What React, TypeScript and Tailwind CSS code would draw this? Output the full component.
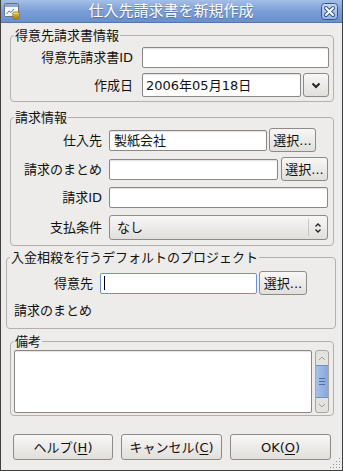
import React from 'react';

const FONT = { fontFamily: '"DejaVu Sans", "Noto Sans CJK JP", sans-serif' };

const inputCls = 'bg-white border border-[#8a8784] rounded-[2px] shadow-[inset_0_1px_1px_rgba(0,0,0,0.12)]';
const btnCls =
  'flex items-center justify-center border border-[#8e8a85] rounded-[3px] bg-gradient-to-b from-[#f8f7f6] to-[#e1dfdc] text-[13px] text-[#111]';

const Frame: React.FC<{ title: string; className: string; children: React.ReactNode }> = ({ title, className, children }) => (
  <fieldset className={`border border-[#b4b0ab] rounded-[4px] ${className}`}>
    <legend className="ml-[3px] px-[1px] text-[13px] leading-[17px] text-[#111]">{title}</legend>
    {children}
  </fieldset>
);

const SelectButton: React.FC<{ className?: string }> = ({ className = '' }) => (
  <button className={`${btnCls} h-[24px] w-[47px] ${className}`}>選択...</button>
);

const TitleIcon = () => (
  <svg width="18" height="18" viewBox="0 0 18 18">
    <rect x="1.5" y="1.5" width="14" height="13" rx="1" fill="#f4f6f8" stroke="#6b7280" />
    <rect x="2" y="2" width="13" height="3" fill="#8aa9d6" />
    <polyline points="3.5,12 6,9 8,10.5 11,7" fill="none" stroke="#4f7bc0" strokeWidth="1" />
    <ellipse cx="13" cy="15.5" rx="3.6" ry="1.6" fill="#c9a21b" stroke="#7a5d07" strokeWidth="0.7" />
    <ellipse cx="13" cy="13.5" rx="3.6" ry="1.6" fill="#e6c43a" stroke="#7a5d07" strokeWidth="0.7" />
    <ellipse cx="13" cy="11.5" rx="3.6" ry="1.6" fill="#f5da5c" stroke="#7a5d07" strokeWidth="0.7" />
  </svg>
);

const CloseIcon = () => (
  <svg width="17" height="17" viewBox="0 0 17 17">
    <defs>
      <linearGradient id="cl" x1="0" y1="0" x2="0" y2="1">
        <stop offset="0" stopColor="#c7d8f1" />
        <stop offset="1" stopColor="#93b2df" />
      </linearGradient>
    </defs>
    <rect x="0.5" y="0.5" width="16" height="16" rx="3" fill="url(#cl)" stroke="#34558a" />
    <path d="M5 5 L12 12 M12 5 L5 12" stroke="#34558a" strokeWidth="4" strokeLinecap="round" />
    <path d="M5 5 L12 12 M12 5 L5 12" stroke="#ffffff" strokeWidth="2" strokeLinecap="round" />
  </svg>
);

const Mn: React.FC<{ c: string }> = ({ c }) => <span className="underline underline-offset-2">{c}</span>;

export default function App() {
  return (
    <div
      className="relative w-[343px] h-[471px] flex flex-col bg-[#edecea] border-x border-b border-[#3f3f3f] text-[13px] leading-[17px] text-[#111] overflow-hidden"
      style={FONT}
    >
      {/* Title bar */}
      <div className="h-[23px] shrink-0 flex items-center px-[2px] bg-gradient-to-b from-[#a3bfe7] via-[#7c9fd6] to-[#6890cd] border-b border-[#5577b0]">
        <TitleIcon />
        <div className="flex-1 text-center text-white text-[15px] leading-[20px] [text-shadow:0_1px_1px_rgba(40,60,100,0.5)]">
          仕入先請求書を新規作成
        </div>
        <div className="mr-[2px]">
          <CloseIcon />
        </div>
      </div>

      {/* 得意先請求書情報 */}
      <Frame title="得意先請求書情報" className="mt-[4px] ml-[9px] mr-[8px] h-[75px]">
        <div className="mt-[3px] pr-[4px] flex items-center">
          <span className="w-[122px] text-right">得意先請求書ID</span>
          <div className={`${inputCls} ml-[9px] flex-1 h-[21px]`} />
        </div>
        <div className="mt-[5px] pr-[4px] flex items-center">
          <span className="w-[122px] text-right">作成日</span>
          <div className={`${inputCls} ml-[9px] flex-1 h-[24px] flex items-center pl-[3px]`}>2006年05月18日</div>
          <button className={`${btnCls} ml-[2px] w-[26px] h-[24px]`}>
            <svg width="10" height="7" viewBox="0 0 10 7">
              <path d="M1.5 1.5 L5 5 L8.5 1.5" fill="none" stroke="#222" strokeWidth="2" />
            </svg>
          </button>
        </div>
      </Frame>

      {/* 請求情報 */}
      <Frame title="請求情報" className="mt-[7px] ml-[9px] mr-[8px] h-[137px]">
        <div className="mt-[2px] h-[24px] flex items-center">
          <span className="w-[91px] text-right">仕入先</span>
          <div className={`${inputCls} ml-[7px] w-[158px] h-[21px] flex items-center pl-[4px]`}>製紙会社</div>
          <SelectButton className="ml-[2px]" />
        </div>
        <div className="mt-[5px] h-[24px] flex items-center">
          <span className="w-[91px] text-right">請求のまとめ</span>
          <div className={`${inputCls} ml-[7px] w-[169px] h-[21px]`} />
          <SelectButton className="ml-[3px]" />
        </div>
        <div className="mt-[6px] pr-[5px] flex items-center">
          <span className="w-[91px] text-right">請求ID</span>
          <div className={`${inputCls} ml-[7px] flex-1 h-[21px]`} />
        </div>
        <div className="mt-[7px] pr-[5px] flex items-center">
          <span className="w-[91px] text-right">支払条件</span>
          <button className={`${btnCls} ml-[7px] flex-1 h-[25px] justify-start`}>
            <span className="flex-1 text-left pl-[7px]">なし</span>
            <span className="w-[1px] h-[17px] bg-[#c9c6c2]" />
            <svg className="mx-[5px]" width="8" height="12" viewBox="0 0 8 12">
              <path d="M1.5 4.5 L4 2 L6.5 4.5 M1.5 7.5 L4 10 L6.5 7.5" fill="none" stroke="#222" strokeWidth="1.3" />
            </svg>
          </button>
        </div>
      </Frame>

      {/* 入金相殺を行うデフォルトのプロジェクト */}
      <fieldset className="mt-[3px] ml-[5px] mr-[6px] h-[80px] border border-[#b4b0ab] rounded-[4px]">
        <legend className="ml-[3px] px-[1px] text-[13px] leading-[17px]">入金相殺を行うデフォルトのプロジェクト</legend>
        <div className="mt-[5px] h-[24px] flex items-center">
          <span className="w-[86px] text-right">得意先</span>
          <div className="ml-[7px] w-[157px] h-[21px] bg-white border border-[#6e93c6] rounded-[2px] flex items-center pl-[3px]">
            <span className="w-[1px] h-[14px] bg-black" />
          </div>
          <button className={`${btnCls} ml-[2px] w-[48px] h-[24px]`}>選択...</button>
        </div>
        <div className="mt-[7px] pl-[7px]">請求のまとめ</div>
      </fieldset>

      {/* 備考 */}
      <Frame title="備考" className="mt-[4px] ml-[9px] mr-[8px] h-[83px]">
        <div className="pl-[3px] pr-[4px] flex">
          <div className={`${inputCls} w-[298px] h-[63px]`} />
          <div className="ml-[3px] w-[14px] h-[63px] flex flex-col border border-[#a9a6a2] rounded-[3px] bg-[#e4e2df] overflow-hidden">
            <div className="h-[14px] flex items-center justify-center">
              <svg width="8" height="5" viewBox="0 0 8 5">
                <path d="M1 4 L4 1 L7 4" fill="none" stroke="#a3a09c" strokeWidth="1" />
              </svg>
            </div>
            <div className="flex-1 flex flex-col items-center justify-center gap-[2px] bg-gradient-to-r from-[#a7c1e8] to-[#86a8dc] border-y border-[#6e8fc4]">
              <span className="w-[6px] h-[1px] bg-[#4e6ea3]" />
              <span className="w-[6px] h-[1px] bg-[#4e6ea3]" />
              <span className="w-[6px] h-[1px] bg-[#4e6ea3]" />
            </div>
            <div className="h-[14px] flex items-center justify-center">
              <svg width="8" height="5" viewBox="0 0 8 5">
                <path d="M1 1 L4 4 L7 1" fill="none" stroke="#a3a09c" strokeWidth="1" />
              </svg>
            </div>
          </div>
        </div>
      </Frame>

      {/* Buttons */}
      <div className="mt-[18px] ml-[12px] flex gap-[8px]">
        <button className={`${btnCls} w-[100px] h-[26px]`}>
          ヘルプ(<Mn c="H" />)
        </button>
        <button className={`${btnCls} w-[101px] h-[26px]`}>
          キャンセル(<Mn c="C" />)
        </button>
        <button className={`${btnCls} w-[101px] h-[26px]`}>
          OK(<Mn c="O" />)
        </button>
      </div>

      {/* Resize grip */}
      <svg className="absolute right-[1px] bottom-[1px]" width="13" height="13" viewBox="0 0 13 13">
        {[
          [11, 2], [11, 5], [8, 5], [11, 8], [8, 8], [5, 8], [11, 11], [8, 11], [5, 11], [2, 11],
        ].map(([x, y], i) => (
          <rect key={i} x={x} y={y} width="1" height="1" fill="#9a9792" />
        ))}
      </svg>
    </div>
  );
}
